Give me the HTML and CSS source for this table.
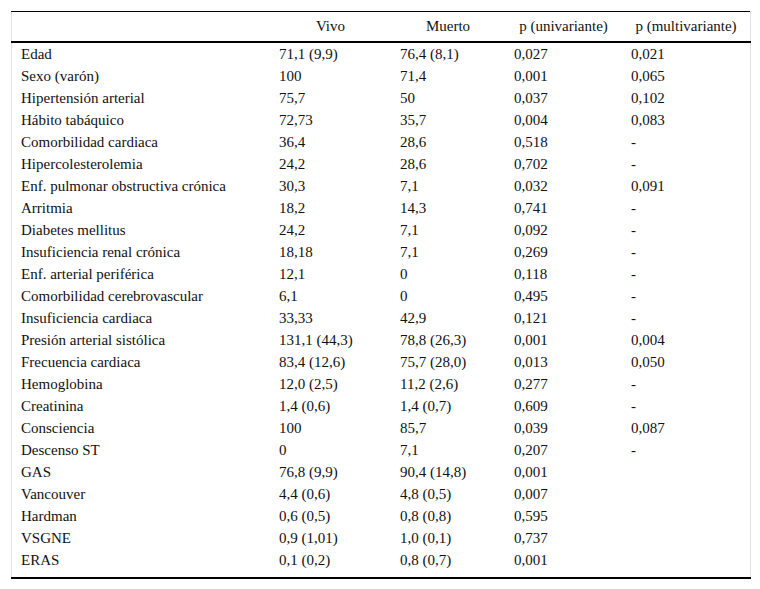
FILE: index.html
```html
<!DOCTYPE html>
<html lang="es">
<head>
<meta charset="utf-8">
<title>Tabla</title>
<link rel="stylesheet" href="styles.css">
</head>
<body>
<div class="wrap">
<table class="tbl">
<thead>
<tr><th class="c0"></th><th class="c1">Vivo</th><th class="c2">Muerto</th><th class="c3">p (univariante)</th><th class="c4">p (multivariante)</th></tr>
</thead>
<tbody>
<tr><td>Edad</td><td>71,1 (9,9)</td><td>76,4 (8,1)</td><td>0,027</td><td>0,021</td></tr>
<tr><td>Sexo (varón)</td><td>100</td><td>71,4</td><td>0,001</td><td>0,065</td></tr>
<tr><td>Hipertensión arterial</td><td>75,7</td><td>50</td><td>0,037</td><td>0,102</td></tr>
<tr><td>Hábito tabáquico</td><td>72,73</td><td>35,7</td><td>0,004</td><td>0,083</td></tr>
<tr><td>Comorbilidad cardiaca</td><td>36,4</td><td>28,6</td><td>0,518</td><td>-</td></tr>
<tr><td>Hipercolesterolemia</td><td>24,2</td><td>28,6</td><td>0,702</td><td>-</td></tr>
<tr><td>Enf. pulmonar obstructiva crónica</td><td>30,3</td><td>7,1</td><td>0,032</td><td>0,091</td></tr>
<tr><td>Arritmia</td><td>18,2</td><td>14,3</td><td>0,741</td><td>-</td></tr>
<tr><td>Diabetes mellitus</td><td>24,2</td><td>7,1</td><td>0,092</td><td>-</td></tr>
<tr><td>Insuficiencia renal crónica</td><td>18,18</td><td>7,1</td><td>0,269</td><td>-</td></tr>
<tr><td>Enf. arterial periférica</td><td>12,1</td><td>0</td><td>0,118</td><td>-</td></tr>
<tr><td>Comorbilidad cerebrovascular</td><td>6,1</td><td>0</td><td>0,495</td><td>-</td></tr>
<tr><td>Insuficiencia cardiaca</td><td>33,33</td><td>42,9</td><td>0,121</td><td>-</td></tr>
<tr><td>Presión arterial sistólica</td><td>131,1 (44,3)</td><td>78,8 (26,3)</td><td>0,001</td><td>0,004</td></tr>
<tr><td>Frecuencia cardiaca</td><td>83,4 (12,6)</td><td>75,7 (28,0)</td><td>0,013</td><td>0,050</td></tr>
<tr><td>Hemoglobina</td><td>12,0 (2,5)</td><td>11,2 (2,6)</td><td>0,277</td><td>-</td></tr>
<tr><td>Creatinina</td><td>1,4 (0,6)</td><td>1,4 (0,7)</td><td>0,609</td><td>-</td></tr>
<tr><td>Consciencia</td><td>100</td><td>85,7</td><td>0,039</td><td>0,087</td></tr>
<tr><td>Descenso ST</td><td>0</td><td>7,1</td><td>0,207</td><td>-</td></tr>
<tr><td>GAS</td><td>76,8 (9,9)</td><td>90,4 (14,8)</td><td>0,001</td><td></td></tr>
<tr><td>Vancouver</td><td>4,4 (0,6)</td><td>4,8 (0,5)</td><td>0,007</td><td></td></tr>
<tr><td>Hardman</td><td>0,6 (0,5)</td><td>0,8 (0,8)</td><td>0,595</td><td></td></tr>
<tr><td>VSGNE</td><td>0,9 (1,01)</td><td>1,0 (0,1)</td><td>0,737</td><td></td></tr>
<tr><td>ERAS</td><td>0,1 (0,2)</td><td>0,8 (0,7)</td><td>0,001</td><td></td></tr>
</tbody>
</table>
</div>
</body>
</html>
```

FILE: styles.css
```css
html, body {
  margin: 0;
  padding: 0;
  background: #ffffff;
}
.wrap {
  padding: 11px 11px 0 11px;
}
.tbl {
  width: 738px;
  border-collapse: collapse;
  table-layout: fixed;
  font-family: "Liberation Serif", serif;
  font-size: 15px;
  color: #111;
  border-left: 1px solid #e2e2e2;
  border-right: 1px solid #e2e2e2;
  border-top: 1px solid #000;
  border-bottom: 2px solid #000;
}
.tbl thead tr {
  height: 30px;
  border-bottom: 2px solid #000;
}
.tbl th {
  font-weight: normal;
  text-align: center;
  padding: 0;
  vertical-align: middle;
  white-space: nowrap;
}
.tbl td {
  padding: 1px 0 0 9px;
  height: 21px;
  line-height: 21px;
  text-align: left;
  vertical-align: middle;
  white-space: nowrap;
}
.tbl tbody tr:last-child td {
  height: 27px;
  vertical-align: top;
}
.c0 { width: 258px; }
.c1 { width: 121px; }
.c2 { width: 114px; }
.c3 { width: 117px; }
.c4 { width: 128px; }
```
